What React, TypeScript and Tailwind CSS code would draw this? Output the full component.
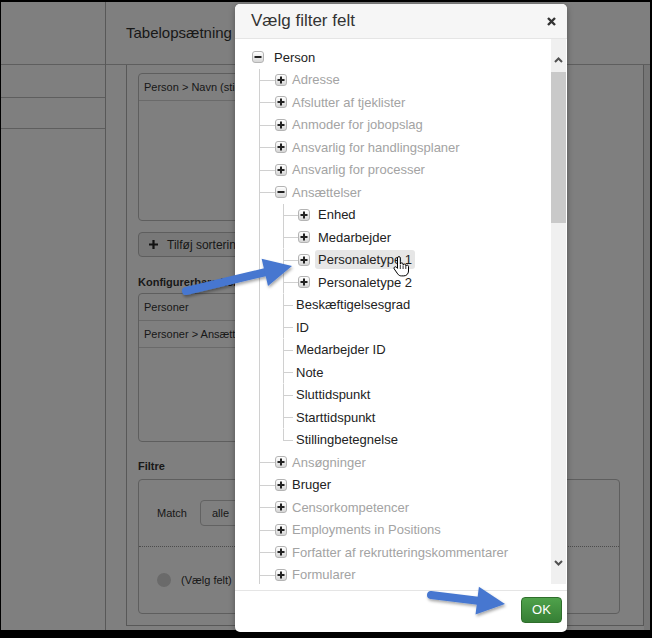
import React from 'react'

type TreeNode = {
  label: string
  muted?: boolean
  toggle?: 'plus' | 'minus'
  active?: boolean
  children?: TreeNode[]
}

const EMPLOYMENT_FIELDS: TreeNode[] = [
  { label: 'Enhed', toggle: 'plus' },
  { label: 'Medarbejder', toggle: 'plus' },
  { label: 'Personaletype 1', toggle: 'plus', active: true },
  { label: 'Personaletype 2', toggle: 'plus' },
  { label: 'Beskæftigelsesgrad' },
  { label: 'ID' },
  { label: 'Medarbejder ID' },
  { label: 'Note' },
  { label: 'Sluttidspunkt' },
  { label: 'Starttidspunkt' },
  { label: 'Stillingbetegnelse' },
]

const PERSON_FIELDS: TreeNode[] = [
  { label: 'Adresse', toggle: 'plus', muted: true },
  { label: 'Afslutter af tjeklister', toggle: 'plus', muted: true },
  { label: 'Anmoder for jobopslag', toggle: 'plus', muted: true },
  { label: 'Ansvarlig for handlingsplaner', toggle: 'plus', muted: true },
  { label: 'Ansvarlig for processer', toggle: 'plus', muted: true },
  { label: 'Ansættelser', toggle: 'minus', muted: true, children: EMPLOYMENT_FIELDS },
  { label: 'Ansøgninger', toggle: 'plus', muted: true },
  { label: 'Bruger', toggle: 'plus' },
  { label: 'Censorkompetencer', toggle: 'plus', muted: true },
  { label: 'Employments in Positions', toggle: 'plus', muted: true },
  { label: 'Forfatter af rekrutteringskommentarer', toggle: 'plus', muted: true },
  { label: 'Formularer', toggle: 'plus', muted: true },
]

function Toggle({ kind }: { kind: 'plus' | 'minus' }) {
  return (
    <span className="flex h-[12px] w-[12px] shrink-0 items-center justify-center rounded-[3px] border border-[#b4b4b4] bg-linear-to-b from-white to-[#d6d6d6]">
      <svg width="8" height="8" viewBox="0 0 8 8">
        <path d={kind === 'plus' ? 'M4 0.5v7M0.5 4h7' : 'M0.5 4h7'} stroke="#222" strokeWidth="2" />
      </svg>
    </span>
  )
}

function Branch({ width, vertical }: { width: number; vertical?: 'full' | 'half' }) {
  return (
    <svg width={width} height="22.5" viewBox={`0 0 ${width} 22.5`} className="shrink-0">
      {vertical ? (
        <line x1="0.5" y1="0" x2="0.5" y2={vertical === 'full' ? 22.5 : 11.5} stroke="#d0d0d0" />
      ) : null}
      <line x1="0" y1="11.5" x2={width} y2="11.5" stroke="#d0d0d0" />
    </svg>
  )
}

function HandCursor() {
  return (
    <svg width="18" height="21" viewBox="0 0 18 21" className="absolute left-[77px] top-[6px]">
      <path
        d="M5.5 2a1.4 1.4 0 0 1 2.8 0v6.2a1.4 1.4 0 0 1 2.8.2v.6a1.4 1.4 0 0 1 2.7.3v.7a1.4 1.4 0 0 1 2.7.4v4.6c0 2.8-2 4.9-4.7 4.9H9.4c-1.6 0-2.8-.7-3.7-2L2.2 12.9a1.4 1.4 0 0 1 2.1-1.8l1.2 1.3Z"
        fill="#fff"
        stroke="#000"
        strokeWidth="1"
      />
      <path d="M8.3 9v4M11.1 9.4v3.6M13.8 10v3" stroke="#000" strokeWidth="0.8" />
    </svg>
  )
}

function Label({ node }: { node: TreeNode }) {
  return (
    <span
      className={`relative flex h-[19px] items-center whitespace-nowrap rounded-[3px] px-[3px] ${
        node.active ? 'bg-[#e6e6e6]' : ''
      } ${node.muted ? 'text-[#a3a3a3]' : 'text-[#222]'}`}
    >
      {node.label}
      {node.active ? <HandCursor /> : null}
    </span>
  )
}

function FieldTree() {
  return (
    <div className="pl-[17px] pt-[7px] text-[13px]">
      <div className="flex h-[22.5px] items-center">
        <Toggle kind="minus" />
        <span className="ml-[7px]">
          <Label node={{ label: 'Person' }} />
        </span>
      </div>
      <div className="ml-[7px] border-l border-[#d0d0d0]">
        {PERSON_FIELDS.map(node => (
          <div key={node.label}>
            <div className="flex h-[22.5px] items-center">
              <Branch width={15} />
              <Toggle kind={node.toggle ?? 'plus'} />
              <span className="ml-[2px]">
                <Label node={node} />
              </span>
            </div>
            {node.children ? (
              <div className="ml-[23px]">
                {node.children.map((child, i) => (
                  <div key={child.label} className="flex h-[22.5px] items-center">
                    <Branch
                      width={child.toggle ? 15 : 10}
                      vertical={i === node.children!.length - 1 ? 'half' : 'full'}
                    />
                    {child.toggle ? (
                      <>
                        <Toggle kind={child.toggle} />
                        <span className="w-[5px]" />
                      </>
                    ) : null}
                    <Label node={child} />
                  </div>
                ))}
              </div>
            ) : null}
          </div>
        ))}
      </div>
    </div>
  )
}

function Chevron({ dir }: { dir: 'up' | 'down' }) {
  return (
    <svg width="9" height="6" viewBox="0 0 9 6">
      <path d={dir === 'up' ? 'M1 5L4.5 1.5L8 5' : 'M1 1L4.5 4.5L8 1'} fill="none" stroke="#505050" strokeWidth="2" />
    </svg>
  )
}

function FilterDialog() {
  return (
    <div className="absolute left-[235px] top-[4px] flex h-[628px] w-[332px] flex-col overflow-hidden rounded-[5px] bg-white shadow-[0_2px_6px_rgba(0,0,0,0.35)]">
      <div className="flex h-[35px] shrink-0 items-center justify-between border-b border-[#e5e5e5] bg-[#f6f6f6] pl-[16px] pr-[11px]">
        <span className="text-[17px] text-[#333]">Vælg filter felt</span>
        <svg width="9" height="9" viewBox="0 0 9 9">
          <path d="M1 1l7 7M8 1L1 8" stroke="#333" strokeWidth="2.4" />
        </svg>
      </div>

      <div className="flex h-[545px] shrink-0">
        <div className="flex-1 overflow-hidden">
          <FieldTree />
        </div>
        <div className="mr-[1px] flex w-[15px] flex-col bg-[#f0f0f0]">
          <div className="flex h-[33px] items-end justify-center pb-[9px]">
            <Chevron dir="up" />
          </div>
          <div className="h-[151px] bg-[#c9c9c9]" />
          <div className="flex-1" />
          <div className="flex h-[33px] items-start justify-center pt-[9px]">
            <Chevron dir="down" />
          </div>
        </div>
      </div>

      <div className="h-[6px] shrink-0" />
      <div className="flex flex-1 items-start justify-end border-t border-[#e5e5e5] pr-[5px] pt-[6px]">
        <button
          type="button"
          className="flex h-[26px] w-[41px] items-center justify-center rounded-[4px] border border-[#2f6e2c] bg-linear-to-b from-[#4fa24b] to-[#367f35] text-[13px] text-white"
        >
          OK
        </button>
      </div>
    </div>
  )
}

function BackgroundPage() {
  return (
    <div className="relative flex h-[628px] w-[649px] bg-white text-[#333]">
      <aside className="flex w-[105px] shrink-0 flex-col border-r border-[#b0b0b0]">
        <div className="h-[63px] border-b border-[#bcbcbc]" />
        <div className="h-[33px] border-b border-[#bcbcbc]" />
        <div className="h-[31px] border-b border-[#bcbcbc]" />
      </aside>

      <div className="flex flex-1 flex-col">
        <header className="flex h-[63px] shrink-0 items-center border-b border-[#bcbcbc] pl-[20px] text-[15px]">
          Tabelopsætning
        </header>
        <div className="flex flex-1">
          <div className="w-[20px] shrink-0" />
          <section className="h-[561px] w-[518px] shrink-0 overflow-hidden border-x border-b border-[#b0b0b0] pl-[11px] text-[11px]">
            <div className="-mt-[12px]">
              <p className="h-[14px] font-bold leading-[14px]">Sortér efter kolonner</p>

              <div className="mt-[6px] h-[148px] w-[400px] rounded-[4px] border border-[#bcbcbc]">
                <div className="flex h-[27px] items-center border-b border-[#d5d5d5] pl-[5px]">
                  Person &gt; Navn (stigende)
                </div>
              </div>

              <div className="mt-[11px] flex h-[25px] w-[130px] items-center rounded-[4px] border border-[#bcbcbc] bg-[#f0f0f0] pl-[10px] text-[12px]">
                <svg width="9" height="9" viewBox="0 0 9 9">
                  <path d="M4.5 0v9M0 4.5h9" stroke="#222" strokeWidth="2.2" />
                </svg>
                <span className="ml-[9px]">Tilføj sortering</span>
              </div>

              <p className="mt-[18px] h-[14px] font-bold leading-[14px]">Konfigurerbare kolonner</p>

              <div className="mt-[4px] h-[149px] w-[400px] rounded-[4px] border border-[#bcbcbc]">
                <div className="flex h-[27px] items-center border-b border-[#d5d5d5] pl-[5px]">Personer</div>
                <div className="flex h-[27px] items-center border-b border-[#d5d5d5] pl-[5px]">
                  Personer &gt; Ansættelser
                </div>
              </div>

              <p className="mt-[17px] h-[14px] font-bold leading-[14px]">Filtre</p>

              <div className="mt-[6px] flex h-[135px] w-[482px] flex-col rounded-[4px] border border-[#bcbcbc]">
                <div className="flex h-[67px] items-center border-b border-dotted border-[#999] pl-[18px]">
                  <span>Match</span>
                  <span className="ml-[13px] flex h-[26px] w-[120px] items-center rounded-[4px] border border-[#c4c4c4] pl-[11px]">
                    alle
                  </span>
                </div>
                <div className="flex flex-1 items-center pl-[18px]">
                  <span className="h-[14px] w-[14px] rounded-full bg-[#d4d4d4]" />
                  <span className="ml-[10px]">(Vælg felt)</span>
                </div>
              </div>
            </div>
          </section>
          <div className="flex-1 bg-[#ececec]" />
        </div>
      </div>

      <div className="absolute inset-0 bg-black/50" />
    </div>
  )
}

function Arrows() {
  return (
    <svg className="pointer-events-none absolute inset-0" width="652" height="638" viewBox="0 0 652 638">
      <defs>
        <filter id="arrowShadow" x="-20%" y="-40%" width="140%" height="180%">
          <feDropShadow dx="1" dy="2" stdDeviation="1.5" floodColor="#000" floodOpacity="0.35" />
        </filter>
      </defs>
      <g filter="url(#arrowShadow)">
        <line x1="186" y1="291" x2="266" y2="272" stroke="#4677d0" strokeWidth="8" strokeLinecap="round" />
        <polygon points="292,266 268,286 261.6,258.8" fill="#4677d0" />
      </g>
      <g filter="url(#arrowShadow)">
        <line x1="431" y1="595" x2="478" y2="600.7" stroke="#4677d0" strokeWidth="8" strokeLinecap="round" />
        <polygon points="505,604 475.5,614.5 478.9,586.7" fill="#4677d0" />
      </g>
    </svg>
  )
}

export default function App() {
  return (
    <div className="relative h-[638px] w-[652px] overflow-hidden bg-black pb-[8px] pl-[1px] pr-[2px] pt-[2px] font-['Liberation_Sans',Arial,sans-serif]">
      <BackgroundPage />
      <FilterDialog />
      <Arrows />
    </div>
  )
}
